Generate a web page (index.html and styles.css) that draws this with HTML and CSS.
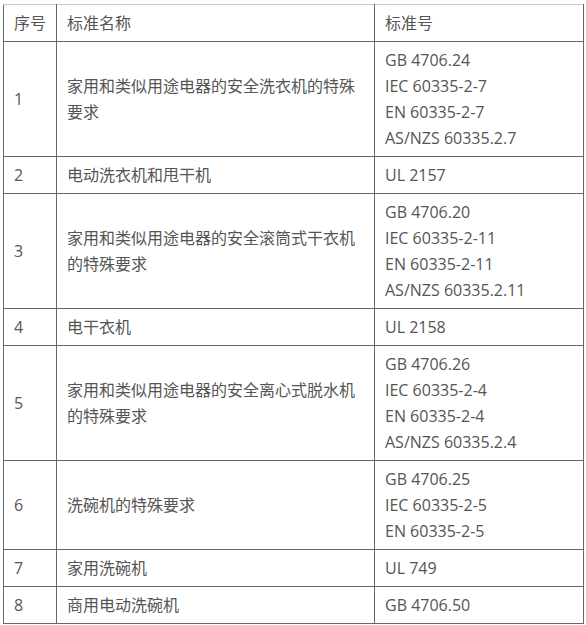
FILE: index.html
```html
<!DOCTYPE html>
<html lang="zh-CN">
<head>
<meta charset="utf-8">
<title>标准列表</title>
<link rel="stylesheet" href="styles.css">
</head>
<body>
<table class="std-table">
  <colgroup>
    <col class="c-no">
    <col class="c-name">
    <col class="c-code">
  </colgroup>
  <thead>
    <tr><th>序号</th><th>标准名称</th><th>标准号</th></tr>
  </thead>
  <tbody>
    <tr><td>1</td><td>家用和类似用途电器的安全洗衣机的特殊要求</td><td>GB 4706.24<br>IEC 60335-2-7<br>EN 60335-2-7<br>AS/NZS 60335.2.7</td></tr>
    <tr><td>2</td><td>电动洗衣机和甩干机</td><td>UL 2157</td></tr>
    <tr><td>3</td><td>家用和类似用途电器的安全滚筒式干衣机的特殊要求</td><td>GB 4706.20<br>IEC 60335-2-11<br>EN 60335-2-11<br>AS/NZS 60335.2.11</td></tr>
    <tr><td>4</td><td>电干衣机</td><td>UL 2158</td></tr>
    <tr><td>5</td><td>家用和类似用途电器的安全离心式脱水机的特殊要求</td><td>GB 4706.26<br>IEC 60335-2-4<br>EN 60335-2-4<br>AS/NZS 60335.2.4</td></tr>
    <tr><td>6</td><td>洗碗机的特殊要求</td><td>GB 4706.25<br>IEC 60335-2-5<br>EN 60335-2-5</td></tr>
    <tr><td>7</td><td>家用洗碗机</td><td>UL 749</td></tr>
    <tr><td>8</td><td>商用电动洗碗机</td><td>GB 4706.50</td></tr>
  </tbody>
</table>
</body>
</html>
```
FILE: styles.css
```css
html, body {
  margin: 0;
  padding: 0;
  background: #fff;
}
body {
  padding: 4px 0 0 3px;
  font-family: "Open Sans", "Noto Sans CJK SC", sans-serif;
  font-size: 16px;
  color: #555;
}
.std-table {
  border-collapse: collapse;
  table-layout: fixed;
  width: 580px;
}
.c-no { width: 53px; }
.c-name { width: 318px; }
.c-code { width: 209px; }
.std-table th,
.std-table td {
  border: 1px solid #666;
  padding: 5px 10px;
  line-height: 26px;
  font-weight: normal;
  text-align: left;
  vertical-align: middle;
}
.std-table th {
  border-top-color: #c8c8c8;
}
```
